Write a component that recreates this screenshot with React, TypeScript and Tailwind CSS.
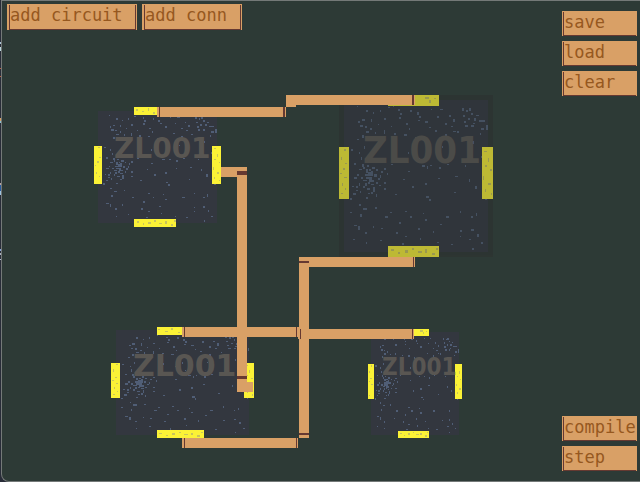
import React from "react";

type Chip = {
  id: string;
  box: string;
  label: string;
  dim?: boolean;
};

const chips: Chip[] = [
  { id: "a", box: "left-[92px] top-[106px] w-[127px] h-[120px]", label: "left-[20px] top-[28px] text-[28px] leading-[28px] font-['DejaVu_Sans',sans-serif]" },
  { id: "b", box: "left-[337px] top-[94px] w-[154px] h-[162px]", label: "left-[24px] top-[36px] text-[38px] leading-[38px] font-['DejaVu_Sans_Condensed','DejaVu_Sans',sans-serif]", dim: true },
  { id: "c", box: "left-[109px] top-[326px] w-[143px] h-[111px]", label: "left-[22px] top-[24px] text-[30px] leading-[30px] font-['DejaVu_Sans',sans-serif]" },
  { id: "d", box: "left-[366px] top-[328px] w-[94px] h-[109px]", label: "left-[14px] top-[26px] text-[24px] leading-[24px] font-['DejaVu_Sans_Condensed','DejaVu_Sans',sans-serif]" },
];

// Surface grain of a chip: x, y, width, height in chip units (154 x 162).
const grain: number[][] = [
  [54, 10, 1, 2], [18, 11, 1, 1], [27, 15, 2, 2], [41, 15, 1, 2], [49, 12, 2, 1], [59, 14, 2, 2], [61, 18, 2, 2], [78, 17, 2, 3],
  [80, 21, 2, 2], [92, 14, 1, 1], [101, 14, 3, 1], [98, 21, 2, 2], [123, 13, 2, 3], [127, 15, 2, 2], [124, 20, 2, 2], [132, 18, 2, 2],
  [137, 20, 3, 1], [129, 23, 2, 2], [140, 25, 6, 2], [125, 26, 2, 2], [134, 28, 2, 1], [23, 24, 3, 2], [21, 30, 3, 2], [26, 31, 2, 2],
  [32, 24, 1, 3], [45, 23, 2, 2], [60, 22, 2, 2], [67, 28, 2, 2], [79, 25, 2, 1], [106, 28, 2, 2], [112, 31, 2, 1], [118, 36, 2, 2],
  [45, 35, 1, 4], [55, 38, 2, 2], [65, 39, 3, 2], [76, 42, 1, 2], [106, 39, 2, 4], [114, 36, 3, 1], [132, 30, 3, 2], [147, 30, 2, 5],
  [23, 40, 2, 3], [18, 44, 2, 1], [25, 51, 1, 3], [20, 57, 1, 2], [76, 51, 2, 3], [69, 57, 1, 2], [133, 46, 2, 3], [124, 43, 2, 2],
  [12, 54, 2, 2], [23, 69, 2, 3], [28, 70, 2, 2], [33, 72, 3, 2], [20, 74, 3, 1], [27, 74, 2, 4], [32, 76, 2, 3], [26, 79, 8, 2],
  [27, 82, 6, 2], [24, 85, 4, 1], [33, 85, 2, 2], [37, 74, 2, 2], [41, 80, 1, 3], [39, 83, 2, 2], [26, 88, 2, 3], [32, 89, 3, 1],
  [37, 87, 2, 2], [18, 79, 2, 2], [15, 82, 3, 2], [20, 88, 1, 3], [13, 91, 2, 1], [28, 93, 3, 2], [34, 92, 2, 3], [40, 90, 2, 1],
  [17, 95, 2, 1], [14, 98, 3, 2], [21, 96, 1, 2], [29, 98, 2, 1], [32, 97, 2, 2], [37, 99, 1, 3], [45, 93, 2, 2], [27, 102, 2, 2],
  [45, 73, 2, 2], [52, 69, 2, 1], [48, 78, 1, 2], [69, 76, 2, 1], [83, 70, 3, 2], [88, 71, 1, 3], [91, 70, 2, 1], [100, 72, 2, 2],
  [108, 69, 2, 1], [126, 70, 1, 2], [143, 73, 2, 2], [116, 81, 3, 1], [99, 83, 2, 1], [86, 88, 2, 2], [64, 84, 2, 1], [73, 91, 2, 2],
  [56, 99, 2, 1], [87, 101, 3, 2], [90, 104, 2, 2], [115, 97, 2, 1], [136, 91, 2, 3], [130, 84, 1, 3], [146, 103, 2, 2],
  [20, 109, 2, 2], [24, 113, 4, 2], [11, 117, 2, 1], [21, 119, 2, 3], [36, 112, 2, 2], [51, 117, 2, 1], [66, 116, 2, 1], [71, 121, 2, 2],
  [46, 121, 3, 2], [60, 127, 2, 2], [86, 124, 2, 2], [107, 121, 3, 2], [84, 118, 1, 1], [121, 116, 1, 2], [132, 121, 2, 2], [137, 118, 1, 3],
  [15, 130, 3, 1], [19, 131, 2, 4], [26, 137, 2, 2], [34, 131, 1, 2], [42, 133, 2, 1], [57, 137, 2, 2], [66, 141, 2, 1], [79, 133, 2, 2],
  [94, 136, 1, 2], [101, 129, 2, 1], [121, 135, 2, 2], [132, 134, 3, 2], [138, 139, 2, 3], [130, 144, 2, 1], [142, 147, 2, 2], [121, 141, 1, 1],
  [14, 144, 2, 1], [27, 147, 1, 2], [41, 145, 2, 1], [63, 148, 2, 2], [81, 143, 1, 2], [98, 147, 2, 1], [112, 149, 2, 1], [133, 153, 2, 2],
  [22, 62, 1, 3], [56, 53, 1, 2], [80, 63, 1, 1], [103, 51, 1, 2], [15, 68, 2, 2], [142, 61, 2, 2], [141, 38, 1, 2], [34, 17, 1, 2],
  [70, 33, 1, 2], [90, 32, 2, 1], [96, 35, 2, 2], [52, 31, 1, 1], [39, 29, 1, 1], [36, 37, 1, 2],
  [24, 72, 2, 2], [30, 74, 2, 2], [29, 77, 3, 2], [35, 79, 3, 3], [30, 84, 3, 3], [22, 82, 2, 2], [29, 87, 2, 2], [34, 95, 2, 2],
  [24, 91, 2, 2], [17, 91, 2, 2], [42, 76, 2, 2], [45, 87, 2, 2], [11, 103, 2, 2], [130, 13, 2, 3], [126, 30, 3, 2], [135, 23, 2, 3],
  [142, 33, 3, 2], [110, 20, 2, 2], [114, 24, 2, 3], [86, 26, 3, 2], [27, 36, 3, 2], [31, 33, 2, 2], [19, 26, 2, 2], [71, 15, 2, 2],
];

const pinGrain: number[][] = [
  [5, 54, 2, 2], [2, 62, 1, 3], [6, 68, 2, 1], [4, 73, 2, 2], [1, 78, 2, 1], [5, 82, 3, 1], [3, 88, 1, 3], [6, 93, 1, 2], [2, 98, 2, 1],
  [145, 56, 3, 1], [149, 63, 1, 4], [146, 70, 2, 2], [151, 74, 2, 2], [144, 81, 1, 4], [149, 88, 3, 2], [146, 94, 1, 3], [152, 98, 1, 2],
  [51, 3, 2, 2], [58, 6, 3, 1], [65, 2, 2, 3], [72, 7, 2, 2], [86, 2, 4, 2], [90, 5, 2, 3], [95, 3, 2, 1],
  [52, 154, 3, 2], [59, 157, 2, 2], [66, 155, 3, 3], [73, 153, 2, 2], [79, 156, 4, 2], [86, 154, 2, 4], [93, 158, 3, 2], [97, 153, 2, 2],
];

function Grain({ cells, fill }: { cells: number[][]; fill: string }) {
  return (
    <g fill={fill}>
      {cells.map(([x, y, w, h], i) => (
        <rect key={i} x={x} y={y} width={w} height={h} />
      ))}
    </g>
  );
}

function CircuitChip({ chip }: { chip: Chip }) {
  return (
    <div className={`absolute ${chip.box} ${chip.dim ? "bg-[#2d3532]" : ""}`}>
      <div className={`h-full w-full ${chip.dim ? "opacity-70" : ""}`}>
        <svg className="block h-full w-full" viewBox="0 0 154 162" preserveAspectRatio="none" shapeRendering="crispEdges" aria-hidden="true">
          <rect x="5" y="5" width="144" height="152" fill="#33373f" />
          <Grain cells={grain} fill="#505e76" />
          <g fill="#fbf236">
            <rect x="0" y="52" width="10" height="52" />
            <rect x="143" y="52" width="11" height="52" />
            <rect x="49" y="0" width="51" height="11" />
            <rect x="49" y="151" width="51" height="11" />
          </g>
          <Grain cells={pinGrain} fill="#c9c45c" />
        </svg>
        <span className={`absolute font-bold text-[#595652] ${chip.label}`}>ZL001</span>
      </div>
    </div>
  );
}

function Wires() {
  return (
    <svg className="pointer-events-none absolute left-0 top-0 h-full w-full" shapeRendering="crispEdges" aria-hidden="true">
      <g transform="translate(-2 -1)">
        <g fill="#d9a066">
          <rect x="157" y="107" width="129" height="10" />
          <rect x="286" y="95" width="129" height="10" />
          <rect x="286" y="105" width="10" height="2" />
          <rect x="221" y="167" width="26" height="10" />
          <rect x="237" y="167" width="10" height="225" />
          <rect x="237" y="382" width="16" height="10" />
          <rect x="182" y="327" width="117" height="10" />
          <rect x="298" y="329" width="116" height="10" />
          <rect x="299" y="257" width="10" height="181" />
          <rect x="299" y="257" width="116" height="10" />
          <rect x="182" y="438" width="116" height="10" />
        </g>
        <g fill="#663931">
          <rect x="159" y="107" width="1" height="10" />
          <rect x="283" y="107" width="2" height="10" />
          <rect x="412" y="95" width="2" height="10" />
          <rect x="237" y="171" width="10" height="4" />
          <rect x="237" y="376" width="10" height="3" />
          <rect x="184" y="327" width="1" height="10" />
          <rect x="296" y="327" width="1" height="10" />
          <rect x="300" y="329" width="1" height="10" />
          <rect x="412" y="329" width="1" height="10" />
          <rect x="299" y="261" width="10" height="2" />
          <rect x="413" y="257" width="1" height="10" />
          <rect x="299" y="433" width="10" height="2" />
          <rect x="184" y="438" width="1" height="10" />
          <rect x="296" y="438" width="1" height="10" />
        </g>
      </g>
    </svg>
  );
}

function ToolButton({ children }: { children: string }) {
  return (
    <button type="button" className="flex h-[25px] w-[75px] bg-[#d9a066] pl-px pr-px pt-px text-left font-['DejaVu_Sans_Mono',monospace] text-[17px] leading-[20px] text-[#96581f]">
      <span className="block h-full w-full whitespace-nowrap border-b border-l border-[#663931]">{children}</span>
    </button>
  );
}

function AddButton({ children, className }: { children: string; className: string }) {
  return (
    <button type="button" className={`flex h-[26px] bg-[#d9a066] pl-0.5 pr-px pt-px text-left font-['DejaVu_Sans_Mono',monospace] text-[17px] leading-[20px] text-[#96581f] ${className}`}>
      <span className="block h-full w-full whitespace-nowrap border-x border-b border-[#663931]">{children}</span>
    </button>
  );
}

function DesktopEdge() {
  return (
    <svg className="h-full w-px shrink-0" shapeRendering="crispEdges" aria-hidden="true">
      <rect x="0" y="42" width="1" height="2" fill="#aac4d4" />
      <rect x="0" y="47" width="1" height="4" fill="#b9d8dc" />
      <rect x="0" y="68" width="1" height="1" fill="#b35f42" />
      <rect x="0" y="76" width="1" height="1" fill="#b35f42" />
      <rect x="0" y="118" width="1" height="3" fill="#d7a064" />
      <rect x="0" y="121" width="1" height="2" fill="#8dc3cf" />
      <rect x="0" y="183" width="1" height="2" fill="#b9a6a2" />
      <rect x="0" y="185" width="1" height="6" fill="#285b9e" />
      <rect x="0" y="191" width="1" height="4" fill="#9dc4df" />
      <rect x="0" y="249" width="1" height="2" fill="#88a5d8" />
      <rect x="0" y="253" width="1" height="2" fill="#a9b2be" />
      <rect x="0" y="259" width="1" height="1" fill="#b4c0d0" />
    </svg>
  );
}

export default function App() {
  return (
    <div className="flex h-screen bg-[#282c38]">
      <DesktopEdge />
      <main className="relative flex flex-1 items-stretch justify-between overflow-hidden rounded-bl-lg border-b border-l border-t border-[#747978] bg-[#2d3a36]">
        <nav aria-label="Add" className="flex items-start gap-[5px] pl-[5px] pt-[3px]">
          <AddButton className="w-[130px]">add circuit</AddButton>
          <AddButton className="w-[100px]">add conn</AddButton>
        </nav>
        <nav aria-label="Project" className="flex flex-col justify-between pb-[10px] pr-[3px] pt-[10px]">
          <div className="flex flex-col gap-[5px]">
            <ToolButton>save</ToolButton>
            <ToolButton>load</ToolButton>
            <ToolButton>clear</ToolButton>
          </div>
          <div className="flex flex-col gap-[5px]">
            <ToolButton>compile</ToolButton>
            <ToolButton>step</ToolButton>
          </div>
        </nav>
        {chips.map((chip) => (
          <CircuitChip key={chip.id} chip={chip} />
        ))}
        <Wires />
      </main>
    </div>
  );
}
